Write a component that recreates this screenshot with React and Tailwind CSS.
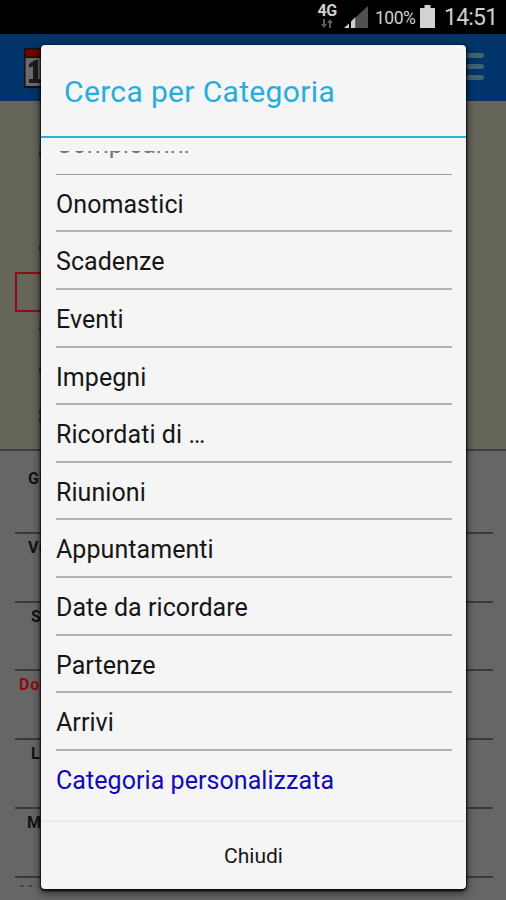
const CATEGORIE = [
  'Onomastici',
  'Scadenze',
  'Eventi',
  'Impegni',
  'Ricordati di …',
  'Riunioni',
  'Appuntamenti',
  'Date da ricordare',
  'Partenze',
  'Arrivi',
];

const GIORNI = [
  { nome: 'Gio', pad: 'pl-[13px]' },
  { nome: 'Ven', pad: 'pl-[13px]' },
  { nome: 'Sab', pad: 'pl-[16px]' },
  { nome: 'Dom', pad: 'pl-[4px]', festivo: true },
  { nome: 'Lun', pad: 'pl-[16px]' },
  { nome: 'Mar', pad: 'pl-[12px]' },
];

function StatusBar() {
  return (
    <header className="h-[34px] shrink-0 bg-black flex justify-end text-[#cfcfcf]">
      <div className="w-5 mr-[7px] pt-[4px] flex flex-col items-center">
        <span className="text-[16px] leading-[14px] font-bold tracking-[-0.5px]">4G</span>
        <svg width="12" height="9" viewBox="0 0 12 9" fill="#5c5c5c" className="mt-[1px]">
          <path d="M2 0h2v5h2L3 9 0 5h2zM8 9h2V4h2L9 0 6 4h2z" />
        </svg>
      </div>
      <svg width="24" height="24" viewBox="0 0 24 24" className="mt-[5px]">
        <path d="M24 1v22H12V12z" fill="#505050" />
        <path d="M11.500 12v11H7v-6.500z" fill="#cfcfcf" />
        <path d="M5 18.500V23H0z" fill="#cfcfcf" />
      </svg>
      <span className="ml-[7px] w-[45px] text-[17.5px] leading-[36px] tracking-[-0.5px]">100%</span>
      <svg width="15" height="24" viewBox="0 0 15 24" fill="#d2d2d2" className="mt-[5px]">
        <path d="M4.500 0h6v3H15v20H0V3h4.500z" />
      </svg>
      <span className="ml-[9px] w-[62px] text-[23px] leading-[36px] tracking-[-0.8px]">14:51</span>
    </header>
  );
}

function Calendario() {
  return (
    <div className="flex flex-col h-[866px]">
      <div className="h-[67px] shrink-0 bg-[#00346a] flex items-start justify-between pl-6 pr-[22px]">
        <svg width="40" height="40" viewBox="0 0 40 40" className="mt-[14px]">
          <path d="M0 0h40v40H0z" fill="#111" />
          <path d="M1.500 1.500h37v7h-37z" fill="#760000" />
          <path d="M1.500 10h37v28h-37z" fill="#6b6b6b" />
          <path d="M5 16l6-4h3v19h4v4H5v-4h4V18l-4 2z" fill="#1c1c1c" />
        </svg>
        <div className="w-8 mt-[19px] flex flex-col gap-[6px]">
          <div className="h-[5px] rounded-full bg-[#3f6470]" />
          <div className="h-[5px] rounded-full bg-[#3f6470]" />
          <div className="h-[5px] rounded-full bg-[#3f6470]" />
        </div>
      </div>

      {/* Griglia del mese */}
      <div className="h-[348px] shrink-0 bg-[#66655a]">
        <div className="ml-[39px] mt-[50px] w-[3px] h-[4px] bg-[#2e2e29]" />
        <div className="ml-[39px] mt-[91px] w-[3px] h-[4px] bg-[#2e2e29]" />
        <div className="ml-[15px] mt-[22px] w-[60px] h-[40px] border-2 border-[#8c0c10]" />
        <div className="ml-[39px] mt-[15px] w-[3px] h-[3px] bg-[#2e2e29]" />
        <div className="ml-[39px] mt-[38px] w-[3px] h-[4px] bg-[#2e2e29]" />
        <div className="ml-[39px] mt-[38px] w-[3px] h-[3px] bg-[#6e1a1a]" />
        <div className="ml-[39px] mt-[6px] w-[3px] h-[3px] bg-[#6e1a1a]" />
      </div>

      <div className="grow border-t-2 border-[#3c3c3c] bg-[#666] pl-[15px] pr-[13px] pt-[14px] overflow-hidden">
        {GIORNI.map(({ nome, pad, festivo }) => (
          <div key={nome} className="h-[68.8px] border-b-2 border-[#3a3a3a]">
            <p className={`${pad} pt-[4px] text-[16px] leading-5 font-bold tracking-[0.8px] ${festivo ? 'text-[#8f0b10]' : 'text-[#111]'}`}>
              {nome}
            </p>
          </div>
        ))}
        <div className="h-[9px] overflow-hidden">
          <p className="pl-1 pt-[4px] text-[16px] leading-5 font-bold text-[#444]">Mer</p>
        </div>
      </div>
    </div>
  );
}

export default function App() {
  return (
    <div className="relative w-[506px] h-[900px] overflow-hidden bg-black font-[Roboto,sans-serif]">
      <StatusBar />
      <Calendario />

      {/* Finestra di ricerca */}
      <div className="absolute left-[41px] top-[45px] w-[425px] h-[844px] rounded-[4px] bg-[#f5f5f5] flex flex-col overflow-hidden shadow-[0_1px_2px_1px_rgba(0,0,0,0.85),0_3px_8px_1px_rgba(0,0,0,0.55)]">
        <h1 className="h-[93px] shrink-0 border-b-2 border-[#2bb0de] pl-[23px] text-[30px] leading-[94px] tracking-[0.35px] text-[#27addd] whitespace-nowrap">
          Cerca per Categoria
        </h1>

        <div className="mt-[13px] ml-[15px] mr-[14px] grow overflow-hidden text-[25px] tracking-[0.06px] text-[#161616] whitespace-nowrap">
          <div className="h-[23.6px] border-b-[1.5px] border-[#a0a0a0] flex items-end overflow-hidden">
            <span className="leading-[58px] -mb-[0.5px] text-[#777]">Compleanni</span>
          </div>
          {CATEGORIE.map((c) => (
            <div key={c} className="h-[57.65px] border-b-2 border-[#b2b2b2] leading-[59px]">
              {c}
            </div>
          ))}
          <div className="leading-[60px] text-[#1309b8]">Categoria personalizzata</div>
        </div>

        <button className="h-[69px] shrink-0 border-t-2 border-[#ebebeb] pt-[2px] text-[21px] text-[#161616]">
          Chiudi
        </button>
      </div>
    </div>
  );
}
